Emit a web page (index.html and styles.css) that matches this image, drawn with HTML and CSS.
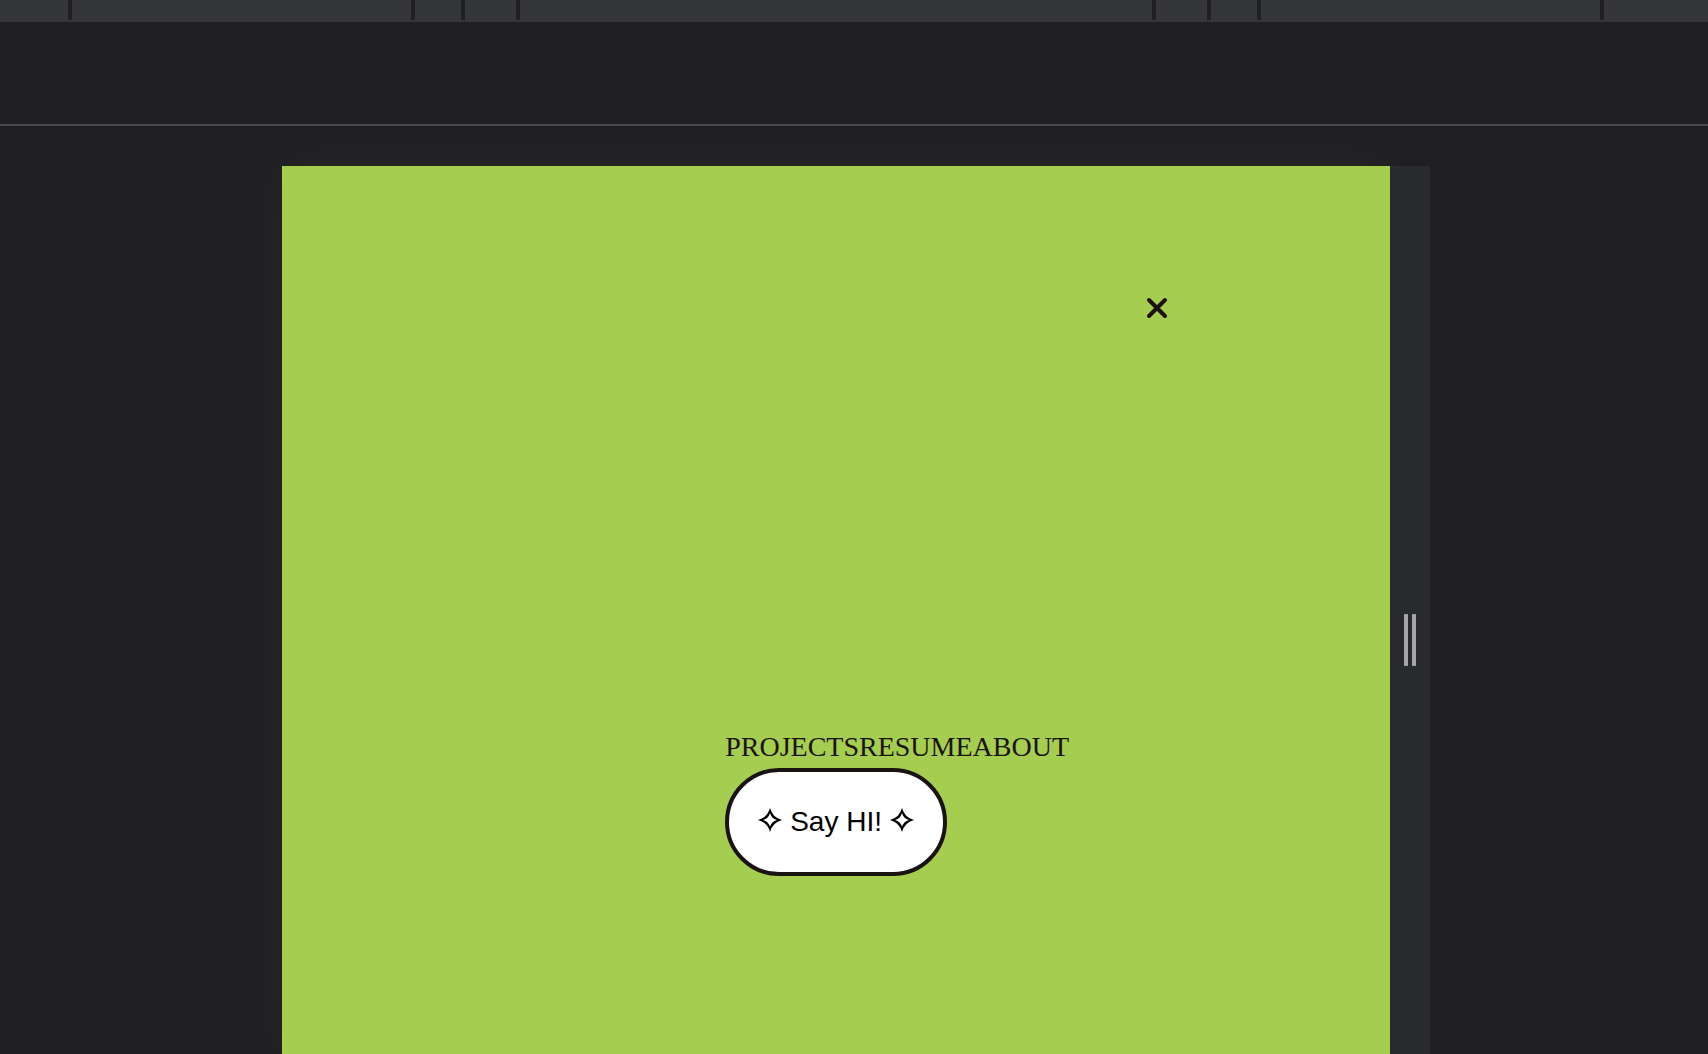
FILE: index.html
```
<!DOCTYPE html>
<html lang="en">
<head>
<meta charset="utf-8">
<meta name="viewport" content="width=device-width, initial-scale=1">
<title>Portfolio menu</title>
<link rel="stylesheet" href="styles.css">
</head>
<body>
<div class="presets" aria-hidden="true">
  <span></span><span></span><span></span><span></span><span></span><span></span><span></span><span></span><span></span>
</div>
<div class="ruler"></div>
<div class="stage">
  <main class="device">
    <header class="top">
      <button class="close" type="button" aria-label="Close menu">
        <svg viewBox="0 0 22 22" aria-hidden="true"><path d="M3 3 19 19M19 3 3 19"/></svg>
      </button>
    </header>
    <div class="menu">
      <nav class="links"><a href="#projects">PROJECTS</a><a href="#resume">RESUME</a><a href="#about">ABOUT</a></nav>
      <button class="hello" type="button">
        <svg class="star" viewBox="0 0 24 24" aria-hidden="true"><path d="M12 0Q14.500 9.500 24 12Q14.500 14.500 12 24Q9.500 14.500 0 12Q9.500 9.500 12 0ZM12 5Q10.500 10.500 5 12Q10.500 13.500 12 19Q13.500 13.500 19 12Q13.500 10.500 12 5Z"/></svg>
        <span>Say HI!</span>
        <svg class="star" viewBox="0 0 24 24" aria-hidden="true"><path d="M12 0Q14.500 9.500 24 12Q14.500 14.500 12 24Q9.500 14.500 0 12Q9.500 9.500 12 0ZM12 5Q10.500 10.500 5 12Q10.500 13.500 12 19Q13.500 13.500 19 12Q13.500 10.500 12 5Z"/></svg>
      </button>
    </div>
  </main>
  <div class="resizer" aria-hidden="true"><i></i><i></i></div>
</div>
</body>
</html>
```
FILE: styles.css
```
* { box-sizing: border-box; }

body {
  margin: 0;
  height: 100vh;
  display: flex;
  flex-direction: column;
  overflow: hidden;
  background: #202022;
}

.presets {
  display: grid;
  grid-template-columns: 68fr 339fr 46fr 51fr 632fr 51fr 46fr 339fr 104fr;
  gap: 4px;
  height: 22px;
  border-bottom: 2px solid #35363a;
}

.presets span { background: #35363a; }

.ruler {
  height: 104px;
  border-bottom: 2px solid #4a4a4c;
}

.stage {
  flex: 1;
  display: flex;
  padding: 40px 278px 0 282px;
}

.device {
  flex: 1;
  background: #a5cd50;
  box-shadow: 0 0 50px rgba(255, 255, 255, 0.04);
}

.top {
  display: flex;
  justify-content: flex-end;
  padding: 131px 20% 0 0;
}

.close {
  display: flex;
  padding: 0;
  border: 0;
  background: none;
  cursor: pointer;
}

.close svg {
  width: 22px;
  height: 22px;
  fill: none;
  stroke: #1a1311;
  stroke-width: 4;
  stroke-linecap: round;
}

.menu {
  display: flex;
  flex-direction: column;
  align-items: flex-start;
  padding: 407px 0 0 40%;
}

.links {
  display: flex;
  font: 28px/42px "Liberation Serif", serif;
}

.links a {
  color: #1a1311;
  text-decoration: none;
}

.hello {
  display: flex;
  align-items: center;
  gap: 8px;
  height: 108px;
  padding: 0 29px;
  border: 4px solid #1a1311;
  border-radius: 54px;
  background: #fff;
  color: #000;
  font: 28px/36px "Liberation Sans", sans-serif;
  cursor: pointer;
}

.star {
  width: 24px;
  height: 24px;
  margin-bottom: 4px;
  fill: #000;
  fill-rule: evenodd;
}

.resizer {
  width: 40px;
  display: flex;
  justify-content: center;
  gap: 4px;
  padding-top: 448px;
  background: #292a2d;
}

.resizer i {
  width: 4px;
  height: 52px;
  border-radius: 1px;
  background: #a5a5a6;
}
```
